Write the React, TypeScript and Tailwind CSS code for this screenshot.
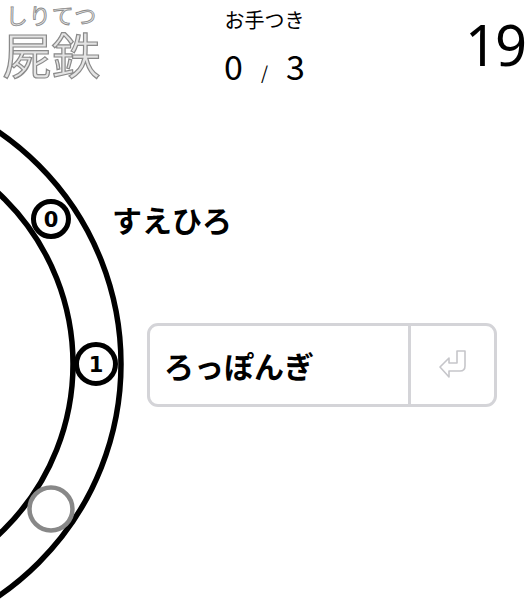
export default function App() {
  return (
    <div className="relative w-[529px] h-[607px] overflow-hidden bg-white text-black font-['Noto_Sans_CJK_JP',sans-serif]">
      <Track />

      <header className="relative grid grid-cols-[1fr_auto_1fr] h-[90px]">
        <div className="flex flex-col items-center w-[103px] pt-[2px] text-[#e4e4e4]">
          <span className="text-[22px] leading-[25px] tracking-[1px] [-webkit-text-stroke:0.8px_#8a8a8a]">しりてつ</span>
          <span className="text-[49px] leading-[52px] [-webkit-text-stroke:1.2px_#8a8a8a]">屍鉄</span>
        </div>
        <div className="flex flex-col items-center pt-[6px]">
          <p className="text-[20px] leading-[28px]">お手つき</p>
          <p className="mt-[14px] flex items-baseline leading-[36px]">
            <span className="text-[34px]">0</span>
            <span className="text-[18px] mx-[18px]">/</span>
            <span className="text-[34px]">3</span>
          </p>
        </div>
        <div className="flex justify-end pt-[14px] pr-[4px]">
          <span className="text-[56px] leading-[60px] tracking-[-2px] font-['Noto_Sans',sans-serif]">19</span>
        </div>
      </header>

      <main className="relative flex flex-col">
        <p className="ml-[112px] mt-[114px] text-[30px] leading-[30px] font-bold">すえひろ</p>

        <div className="ml-[147px] mt-[89px] flex w-[350px] h-[84px] rounded-[11px] border-[3px] border-[#d4d4d8] bg-white">
          <div className="flex-1 flex items-center pl-[14px] text-[30px] font-bold">ろっぽんぎ</div>
          <button className="w-[86px] flex items-center justify-center border-l-[3px] border-[#d4d4d8]">
            <svg width="28" height="30" viewBox="0 0 28 30" fill="none" stroke="#c6c6ca" strokeWidth="1.6" strokeLinejoin="round">
              <path d="M1 17 L10 8 L10 13 L18 13 L18 1 L26 1 L26 16 Q26 21 21 21 L10 21 L10 27 Z" />
            </svg>
          </button>
        </div>
      </main>
    </div>
  );
}

function Track() {
  const cx = -160;
  const cy = 364;
  const mid = 256;
  const at = (deg: number) => {
    const r = (deg * Math.PI) / 180;
    return { x: cx + mid * Math.cos(r), y: cy + mid * Math.sin(r) };
  };
  const n0 = at(-34.5);
  const n1 = at(0);
  const n2 = at(34.5);
  return (
    <svg className="absolute inset-0" width="529" height="607" viewBox="0 0 529 607">
      <circle cx={cx} cy={cy} r={281} fill="none" stroke="#000" strokeWidth="5.5" />
      <circle cx={cx} cy={cy} r={233} fill="none" stroke="#000" strokeWidth="5.5" />

      <circle cx={n0.x} cy={n0.y} r={17.5} fill="#fff" stroke="#000" strokeWidth="5" />
      <text x={n0.x} y={n0.y + 7.5} textAnchor="middle" fontSize="21" fontWeight="700" fontFamily="'DejaVu Sans', sans-serif">0</text>

      <circle cx={n1.x} cy={n1.y} r={19.5} fill="#fff" stroke="#000" strokeWidth="5" />
      <text x={n1.x} y={n1.y + 7.5} textAnchor="middle" fontSize="21" fontWeight="700" fontFamily="'DejaVu Sans', sans-serif">1</text>

      <circle cx={n2.x} cy={n2.y} r={21.5} fill="#fff" stroke="#888" strokeWidth="4.5" />
    </svg>
  );
}
